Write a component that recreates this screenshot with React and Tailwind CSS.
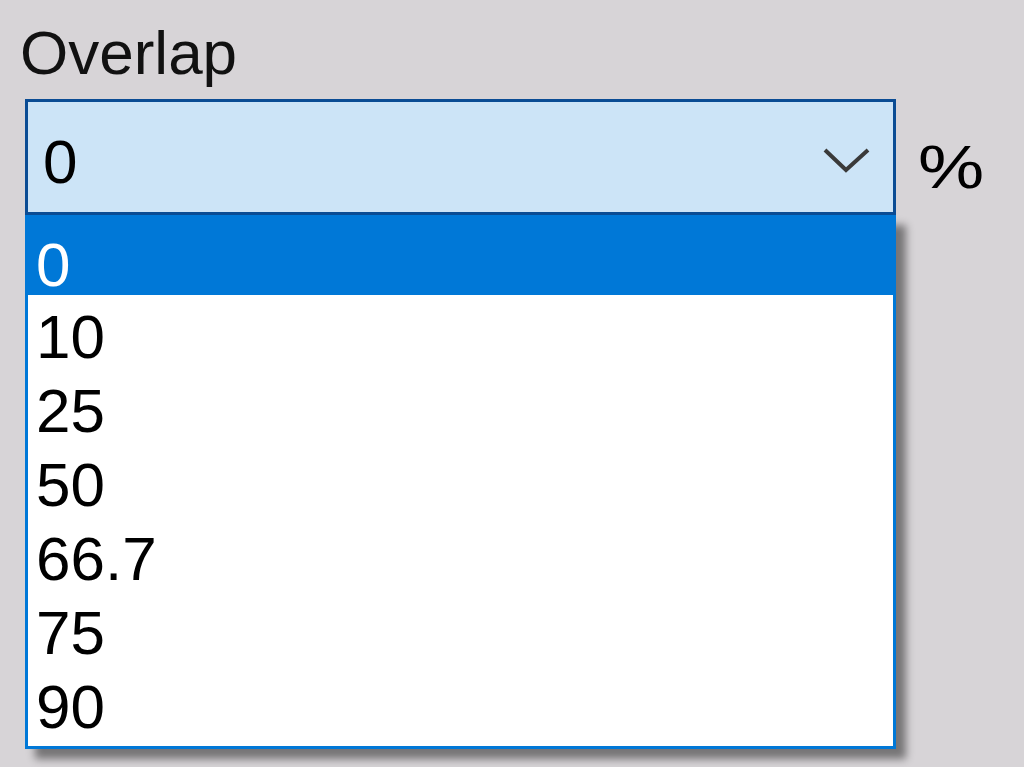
import React from "react";

const items = ["0", "10", "25", "50", "66.7", "75", "90"];

export default function App() {
  return (
    <div
      className="relative w-[1024px] h-[767px] overflow-hidden bg-[#d7d4d7] text-black"
      style={{ fontFamily: '"Liberation Sans", Arial, sans-serif' }}
    >
      <div className="pl-[20px] pt-[22px] text-[62px] leading-[62px] text-[#111]">Overlap</div>
      <div className="mt-[15px] ml-[25px] flex items-start">
        <div className="w-[871px] h-[116px] border-[3px] border-[#0a4c94] bg-[#cce4f7] flex items-start justify-between">
          <div className="pl-[15px] pt-[29px] text-[62px] leading-[62px]">0</div>
          <svg width="50" height="30" viewBox="0 0 50 30" className="mt-[44px] mr-[21px]">
            <polyline points="3,4 24,24 46,4" fill="none" stroke="#3a3a3a" strokeWidth="4" />
          </svg>
        </div>
        <div className="ml-[22px] pt-[37px] text-[62px] leading-[62px] scale-x-[1.2] origin-left">%</div>
      </div>
      <div className="absolute left-[25px] top-[215px] w-[871px] border-[3px] border-[#0078d7] bg-white pb-[7px] shadow-[10px_10px_8px_rgba(0,0,0,0.45)]">
        {items.map((v, i) =>
          i === 0 ? (
            <div key={v} className="h-[77px] pt-[16px] pl-[8px] bg-[#0078d7] text-white text-[62px] leading-[62px]">
              {v}
            </div>
          ) : (
            <div key={v} className="h-[74px] pt-[11px] pl-[8px] text-[62px] leading-[62px]">
              {v}
            </div>
          )
        )}
      </div>
    </div>
  );
}
